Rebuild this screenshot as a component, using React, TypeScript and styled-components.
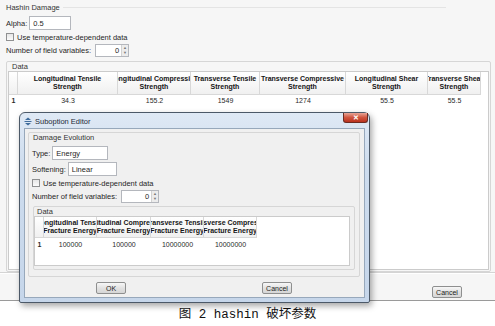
import React from 'react';
import styled, { createGlobalStyle } from 'styled-components';

type Column = { top: string; bottom: string; width: number; value: string };

const mainColumns: Column[] = [
  { top: 'Longitudinal Tensile', bottom: 'Strength', width: 100, value: '34.3' },
  { top: 'Longitudinal Compressive', bottom: 'Strength', width: 73, value: '155.2' },
  { top: 'Transverse Tensile', bottom: 'Strength', width: 69, value: '1549' },
  { top: 'Transverse Compressive', bottom: 'Strength', width: 86, value: '1274' },
  { top: 'Longitudinal Shear', bottom: 'Strength', width: 82, value: '55.5' },
  { top: 'Transverse Shear', bottom: 'Strength', width: 53, value: '55.5' },
];

const evolutionColumns: Column[] = [
  { top: 'Longitudinal Tensile', bottom: 'Fracture Energy', width: 53, value: '100000' },
  { top: 'Longitudinal Compressive', bottom: 'Fracture Energy', width: 54, value: '100000' },
  { top: 'Transverse Tensile', bottom: 'Fracture Energy', width: 53, value: '10000000' },
  { top: 'Transverse Compressive', bottom: 'Fracture Energy', width: 53, value: '10000000' },
];

const GlobalStyle = createGlobalStyle`
  html, body { margin: 0; padding: 0; background: #fff; }
  body { font-family: "Liberation Sans", Arial, sans-serif; color: #1e1e1e; }
`;

const Page = styled.div`
  position: relative;
  width: 495px;
  height: 326px;
  overflow: hidden;
  background: #fff;
  display: flex;
  flex-direction: column;
`;

const MainWindow = styled.div`
  height: 301px;
  box-sizing: border-box;
  background: #f6f6f6;
  border-bottom: 1px solid #9a9a9a;
  display: flex;
  flex-direction: column;
  font-size: 7.5px;
`;

const MainBody = styled.div`
  flex: 1;
  display: flex;
  flex-direction: column;
  padding: 2px 4px 0 6px;
  min-height: 0;
`;

const GroupTitle = styled.div`
  display: flex;
  align-items: center;
  gap: 3px;
  height: 10px;
  color: #333;
  &::after {
    content: '';
    flex: 1;
    margin-right: 45px;
    border-top: 1px solid #e4e4e4;
  }
`;

const Row = styled.div<{ $h: number; $gap: number }>`
  display: flex;
  align-items: center;
  gap: 2px;
  height: ${p => p.$h}px;
  margin-top: ${p => p.$gap}px;
  color: #262626;
`;

const TextField = styled.div<{ $w: number }>`
  width: ${p => p.$w}px;
  height: 100%;
  box-sizing: border-box;
  background: #fff;
  border: 1px solid #b4b7bd;
  display: flex;
  align-items: center;
  padding-left: 3px;
`;

const Spinner = styled.div<{ $w: number }>`
  width: ${p => p.$w}px;
  height: 100%;
  margin-left: 2px;
  box-sizing: border-box;
  background: #fff;
  border: 1px solid #b4b7bd;
  display: flex;
  align-items: center;
  justify-content: flex-end;
`;

const SpinArrows = styled.div`
  width: 6px;
  height: 100%;
  margin-left: 2px;
  background: #ececec;
  border-left: 1px solid #d2d2d2;
  display: flex;
  flex-direction: column;
  align-items: center;
  justify-content: space-evenly;
  font-size: 4px;
  line-height: 4px;
  color: #777;
`;

const CheckBox = styled.span`
  width: 8px;
  height: 8px;
  box-sizing: border-box;
  border: 1px solid #8f9091;
  background: linear-gradient(#e6e6e6, #fbfbfb);
  margin-right: 1px;
`;

const Group = styled.div<{ $gap: number; $pad: string }>`
  flex: 1;
  display: flex;
  flex-direction: column;
  margin-top: ${p => p.$gap}px;
  padding: ${p => p.$pad};
  border: 1px solid #d6d6d6;
  border-radius: 2px;
  min-height: 0;
`;

const Legend = styled.div<{ $indent: number; $h: number }>`
  height: ${p => p.$h}px;
  display: flex;
  align-items: center;
  padding-left: ${p => p.$indent}px;
  color: #333;
`;

const TableView = styled.div<{ $h?: number }>`
  background: #fff;
  border: 1px solid #cbcbcb;
  overflow: hidden;
  box-sizing: border-box;
  ${p => (p.$h ? `height: ${p.$h}px;` : 'flex: 1;')}
`;

const Grid = styled.div<{ $cols: string }>`
  display: grid;
  grid-template-columns: ${p => p.$cols};
  width: max-content;
`;

const HeadCell = styled.div<{ $h: number }>`
  height: ${p => p.$h}px;
  box-sizing: border-box;
  display: flex;
  flex-direction: column;
  align-items: center;
  justify-content: center;
  overflow: hidden;
  white-space: nowrap;
  font-weight: bold;
  font-size: 7px;
  line-height: 8.5px;
  color: #151515;
  background: linear-gradient(#ffffff, #f0f0f0);
  border-right: 1px solid #d8d8d8;
  border-bottom: 1px solid #d8d8d8;
`;

const BodyCell = styled.div<{ $h: number; $bold?: boolean }>`
  height: ${p => p.$h}px;
  display: flex;
  align-items: center;
  justify-content: center;
  font-size: 7px;
  font-weight: ${p => (p.$bold ? 'bold' : 'normal')};
  color: #2a2a2a;
`;

const Footer = styled.div`
  height: 28px;
  box-sizing: border-box;
  border-top: 1px solid #d4d4d4;
  box-shadow: inset 0 1px #ffffff;
  display: flex;
  justify-content: flex-end;
  align-items: flex-start;
  padding: 13px 33px 0 0;
`;

const Button = styled.div`
  width: 30px;
  height: 12px;
  box-sizing: border-box;
  border: 1px solid #8e8f8f;
  border-radius: 2px;
  background: linear-gradient(#f7f7f7, #e2e2e2 50%, #d6d6d6);
  display: flex;
  align-items: center;
  justify-content: center;
  font-size: 7px;
  color: #222;
`;

const Caption = styled.div`
  flex: 1;
  text-align: center;
  padding-top: 7px;
  font-family: "Liberation Mono", "Noto Sans CJK SC", monospace;
  font-size: 12.5px;
  line-height: 14px;
  color: #111;
`;

/* floating child window over the material dialog */
const SubDialog = styled.div`
  position: absolute;
  left: 19px;
  top: 112px;
  width: 351px;
  height: 191px;
  box-sizing: border-box;
  border: 1px solid #4c5968;
  border-radius: 6px 6px 2px 2px;
  background: linear-gradient(#dfe9f5, #cddcee 30%, #c6d6ea);
  padding: 0 4px 4px 4px;
  display: flex;
  flex-direction: column;
  box-shadow: 2px 3px 6px rgba(0, 0, 0, 0.35);
  font-size: 7.5px;
`;

const TitleBar = styled.div`
  height: 15px;
  display: flex;
  align-items: flex-start;
`;

const TitleText = styled.div`
  display: flex;
  align-items: center;
  gap: 3px;
  height: 14px;
  margin-top: 1px;
  color: #1e2a36;
`;

const CloseButton = styled.div`
  margin-left: auto;
  margin-right: -3px;
  width: 25px;
  height: 10px;
  box-sizing: border-box;
  border: 1px solid #6c2b22;
  border-top: none;
  border-radius: 0 0 3px 3px;
  background: linear-gradient(#e8a597, #d0553f 50%, #b9321f);
  display: flex;
  align-items: center;
  justify-content: center;
  color: #fff;
  font-size: 7px;
  font-weight: bold;
`;

const SubContent = styled.div`
  flex: 1;
  display: flex;
  flex-direction: column;
  background: #f0f0f0;
  border: 1px solid #97a8bb;
  padding: 3px 4px 0 3px;
`;

const SubGroup = styled.div`
  height: 145px;
  box-sizing: border-box;
  display: flex;
  flex-direction: column;
  border: 1px solid #d6d6d6;
  border-radius: 2px;
  padding: 0 3px 6px 3px;
`;

const SubData = styled.div`
  flex: 1;
  display: flex;
  flex-direction: column;
  margin: 3px 1px 0 1px;
  border: 1px solid #d6d6d6;
  border-radius: 2px;
  padding: 0 4px 1px 0;
`;

const SubFooter = styled.div`
  flex: 1;
  display: flex;
  padding-top: 5px;
`;

const ButtonSlot = styled.div`
  flex: 1;
  display: flex;
  justify-content: center;
  align-items: flex-start;
`;

const TitleIcon = () => (
  <svg width="8" height="9" viewBox="0 0 8 9">
    <path d="M4 0.5 L7 3 H1 Z" fill="#3f6c9c" />
    <path d="M4 8.5 L7 6 H1 Z" fill="#3f6c9c" />
    <rect x="0.5" y="4" width="7" height="1" fill="#3f6c9c" />
  </svg>
);

const DataTable = ({
  columns,
  headH,
  rowH,
  height,
}: {
  columns: Column[];
  headH: number;
  rowH: number;
  height?: number;
}) => (
  <TableView $h={height}>
    <Grid $cols={['9px', ...columns.map(c => `${c.width}px`)].join(' ')}>
      <HeadCell $h={headH} />
      {columns.map(c => (
        <HeadCell key={c.top} $h={headH}>
          <span>{c.top}</span>
          <span>{c.bottom}</span>
        </HeadCell>
      ))}
      <BodyCell $h={rowH} $bold>
        1
      </BodyCell>
      {columns.map(c => (
        <BodyCell key={c.top} $h={rowH}>
          {c.value}
        </BodyCell>
      ))}
    </Grid>
  </TableView>
);

const FieldCount = ({ w }: { w: number }) => (
  <Row $h={13} $gap={2}>
    Number of field variables:
    <Spinner $w={w}>
      0
      <SpinArrows>
        <span>▲</span>
        <span>▼</span>
      </SpinArrows>
    </Spinner>
  </Row>
);

const App = () => {
  return (
    <Page>
      <GlobalStyle />
      <MainWindow>
        <MainBody>
          <GroupTitle>Hashin Damage</GroupTitle>
          <Row $h={14} $gap={4}>
            Alpha:
            <TextField $w={42}>0.5</TextField>
          </Row>
          <Row $h={10} $gap={2}>
            <CheckBox />
            Use temperature-dependent data
          </Row>
          <FieldCount w={34} />
          <Group $gap={4} $pad="0 1px 1px 1px">
            <Legend $indent={4} $h={9}>Data</Legend>
            <DataTable columns={mainColumns} headH={23} rowH={10} />
          </Group>
        </MainBody>
        <Footer>
          <Button>Cancel</Button>
        </Footer>
      </MainWindow>
      <Caption>图 2 hashin 破坏参数</Caption>

      <SubDialog>
        <TitleBar>
          <TitleText>
            <TitleIcon />
            Suboption Editor
          </TitleText>
          <CloseButton>✕</CloseButton>
        </TitleBar>
        <SubContent>
          <SubGroup>
            <Legend $indent={1} $h={8}>Damage Evolution</Legend>
            <Row $h={14} $gap={5}>
              Type:
              <TextField $w={56}>Energy</TextField>
            </Row>
            <Row $h={14} $gap={2}>
              Softening:
              <TextField $w={49}>Linear</TextField>
            </Row>
            <Row $h={10} $gap={2}>
              <CheckBox />
              Use temperature-dependent data
            </Row>
            <FieldCount w={38} />
            <SubData>
              <Legend $indent={3} $h={9}>Data</Legend>
              <DataTable columns={evolutionColumns} headH={21} rowH={12} height={50} />
            </SubData>
          </SubGroup>
          <SubFooter>
            <ButtonSlot>
              <Button>OK</Button>
            </ButtonSlot>
            <ButtonSlot>
              <Button>Cancel</Button>
            </ButtonSlot>
          </SubFooter>
        </SubContent>
      </SubDialog>
    </Page>
  );
};

export default App;
